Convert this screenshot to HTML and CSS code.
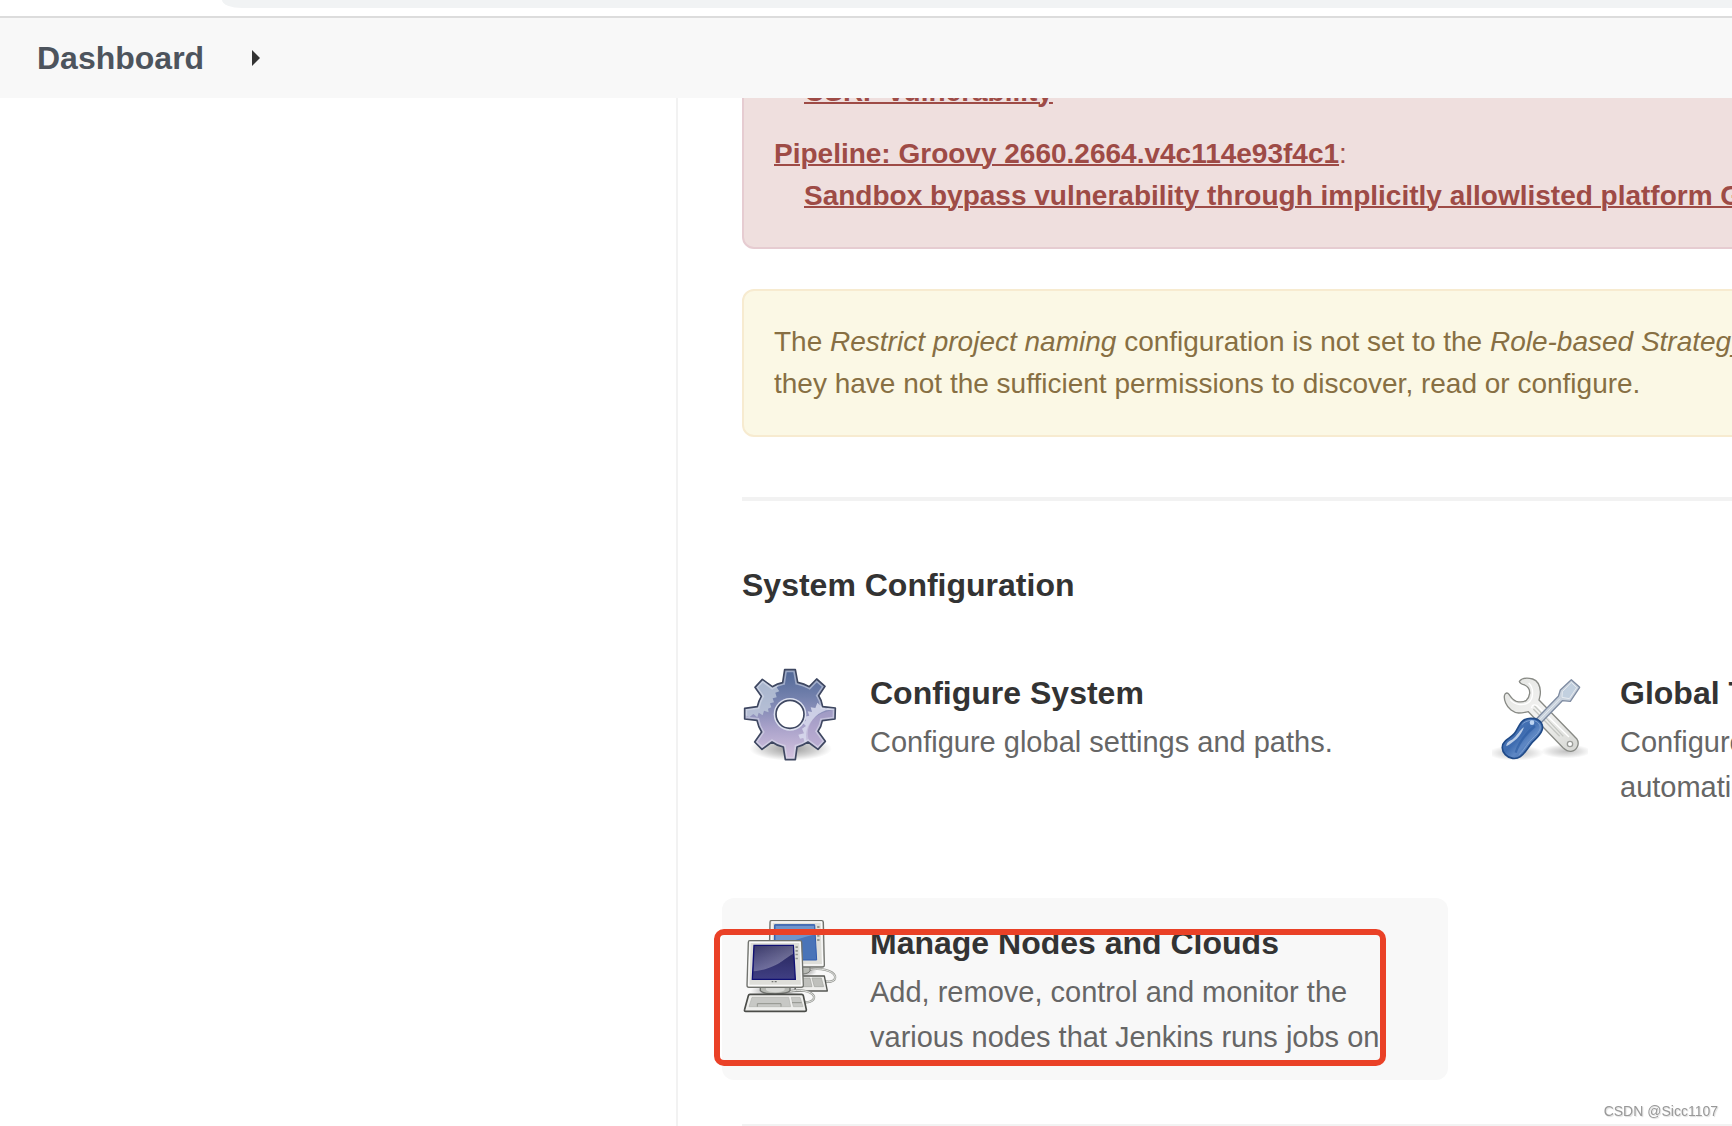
FILE: index.html
```html
<!DOCTYPE html>
<html lang="en">
<head>
    <meta charset="UTF-8">
    <meta name="viewport" content="width=device-width, initial-scale=1.0">
    <title>Manage Jenkins</title>
    <link rel="stylesheet" href="styles.css">
</head>
<body>
    <div class="browser-bar">
        <div class="address"></div>
    </div>

    <nav class="breadcrumbs">
        <a href="#" class="crumb">Dashboard</a>
        <button class="crumb-arrow" aria-label="Open breadcrumb menu">
            <svg width="8" height="16" viewBox="0 0 8 16"><path d="M0 0L8 8L0 16Z" fill="#333"/></svg>
        </button>
    </nav>

    <div class="page">
        <aside class="side-panel"></aside>
        <main class="main-panel">
            <div class="alert alert-danger">
                <dl>
                    <dd><a href="#">CSRF vulnerability</a></dd>
                    <dt><a href="#">Pipeline: Groovy 2660.2664.v4c114e93f4c1</a>:</dt>
                    <dd><a href="#">Sandbox bypass vulnerability through implicitly allowlisted platform Groovy</a></dd>
                </dl>
            </div>

            <div class="alert alert-warning">
                The <i>Restrict project naming</i> configuration is not set to the <i>Role-based Strategy</i>.<br>
                they have not the sufficient permissions to discover, read or configure.
            </div>

            <hr class="divider">

            <h2 class="section-title">System Configuration</h2>
            <div class="cards">
                <a href="#" class="card">
                    <svg class="card-icon" viewBox="66 54 288 288" aria-hidden="true">
                        <defs>
                            <linearGradient id="gearFill" x1="0" y1="0" x2="0" y2="1">
                                <stop offset="0" stop-color="#4f6796"/>
                                <stop offset="0.3" stop-color="#7280ac"/>
                                <stop offset="0.65" stop-color="#a9a2ca"/>
                                <stop offset="1" stop-color="#d6c4e0"/>
                            </linearGradient>
                            <radialGradient id="shade">
                                <stop offset="0" stop-color="#000" stop-opacity="0.4"/>
                                <stop offset="0.6" stop-color="#000" stop-opacity="0.18"/>
                                <stop offset="1" stop-color="#000" stop-opacity="0"/>
                            </radialGradient>
                            <path id="gear" d="M194 59L226 59L233 97Q252 101 268 110L290 87L315 109L296 137Q305 150 308 170L346 174L345 207L307 212Q304 230 294 244L316 274L294 298L264 276Q249 286 231 291L226 329L196 329L190 291Q171 287 156 276L126 298L104 276L125 246Q115 231 111 211L74 207L74 175L112 170Q116 152 124 139L105 112L127 88L157 110Q172 101 188 98Z"/>
                            <clipPath id="gearClip"><use href="#gear"/></clipPath>
                        </defs>
                        <ellipse cx="212" cy="296" rx="124" ry="36" fill="url(#shade)"/>
                        <use href="#gear" fill="url(#gearFill)"/>
                        <g clip-path="url(#gearClip)">
                            <path d="M66 54H180V100L170 112L178 124L166 128L170 142L158 145L162 157L150 160L154 172L144 176L146 187L132 182L128 196L116 188L112 202L100 192L88 202L66 190Z" fill="#c3cedd" opacity="0.75"/>
                            <path d="M350 165L318 176L300 166L292 158L286 174L272 172L276 186L263 184L268 197L254 200L258 212L248 218L258 228L246 236L252 250L235 254L240 266L250 264L258 290L268 272C253 240 275 195 318 181L350 178Z" fill="#dcdff0" opacity="0.8"/>
                            <path d="M262 280C248 238 272 187 350 178V310Z" fill="#b4a5ce" opacity="0.5"/>
                            <use href="#gear" fill="none" stroke="#dfe3f0" stroke-width="15" opacity="0.5"/>
                        </g>
                        <use href="#gear" fill="none" stroke="#3e4761" stroke-width="5" stroke-linejoin="round"/>
                        <circle cx="210" cy="193" r="49" fill="#dce0ef"/>
                        <circle cx="210" cy="193" r="42" fill="#fff" stroke="#3e4761" stroke-width="5"/>
                    </svg>
                    <div class="card-text">
                        <h3>Configure System</h3>
                        <p>Configure global settings and paths.</p>
                    </div>
                </a>

                <a href="#" class="card">
                    <svg class="card-icon" viewBox="36 24 288 288" aria-hidden="true">
                        <defs>
                            <linearGradient id="steel" x1="0" y1="0" x2="1" y2="1">
                                <stop offset="0" stop-color="#e2e3e0"/>
                                <stop offset="0.5" stop-color="#f3f3f2"/>
                                <stop offset="1" stop-color="#d5d6d2"/>
                            </linearGradient>
                            <linearGradient id="handle" x1="0" y1="0" x2="1" y2="1">
                                <stop offset="0" stop-color="#5880bd"/>
                                <stop offset="0.45" stop-color="#3e6cb0"/>
                                <stop offset="0.6" stop-color="#5f88c4"/>
                                <stop offset="1" stop-color="#20509a"/>
                            </linearGradient>
                        </defs>
                        <ellipse cx="108" cy="279" rx="84" ry="23" fill="url(#shade)" opacity="0.6"/>
                        <ellipse cx="258" cy="274" rx="76" ry="21" fill="url(#shade)" opacity="0.6"/>
                        <path d="M118 64C126 54 143 53 158 57C172 62 180 78 181 94C182 105 179 112 177 120L290 236C301 252 290 272 273 274C263 275 256 269 249 263L145 155C136 157 127 159 116 159C100 158 84 146 77 129C73 119 71 107 76 101C80 98 84 99 87 103C94 114 101 121 109 124C120 127 131 126 139 121C145 115 148 108 149 100C150 88 142 79 134 75C127 73 119 71 118 64Z" fill="url(#steel)" stroke="#888a85" stroke-width="4"/>
                        <path d="M163 137L250 229M160 147L239 229" stroke="#c5c7c3" stroke-width="4" fill="none"/>
                        <path d="M155 144Q156 131 170 136L267 231M91 119C103 134 127 139 145 128C161 117 163 85 146 69" stroke="#fff" stroke-width="4" fill="none"/>
                        <circle cx="270" cy="252" r="8" fill="#fff" stroke="#999b97" stroke-width="4"/>
                        <path d="M169 177L235 109L241 90L274 59L299 82L271 124L247 122L182 190Z" fill="#c9d2dd" stroke="#7e8ba1" stroke-width="4" stroke-linejoin="round"/>
                        <path d="M177 181L240 116M247 95L274 67L290 83L268 116L246 112Z" fill="#c2d0df" stroke="#e6ebf0" stroke-width="3"/>
                        <path d="M124 187C134 175 150 173 165 176C183 181 191 195 186 211C181 226 168 236 156 248C144 262 135 280 121 290C108 299 88 297 76 284C64 272 64 254 75 244C83 236 94 231 103 221C111 212 115 198 124 187Z" fill="url(#handle)" stroke="#204a87" stroke-width="5"/>
                        <path d="M127 193C137 181 156 179 168 184C179 190 183 200 179 210C172 225 157 234 148 245C136 260 128 276 116 285" fill="none" stroke="#7c9fd0" stroke-width="3"/>
                        <path d="M79 259C102 247 122 229 132 202C119 209 112 228 98 238C88 243 79 248 79 259Z" fill="#dbe6f5" opacity="0.8"/>
                        <path d="M165 198C143 216 119 240 107 278" fill="none" stroke="#2a5aa2" stroke-width="7" opacity="0.6"/>
                        <circle cx="156" cy="188" r="7" fill="#bdd4f2"/>
                    </svg>
                    <div class="card-text">
                        <h3>Global Tool Configuration</h3>
                        <p>Configure tools, their locations and automatic installers.</p>
                    </div>
                </a>

                <a href="#" class="card card-hover">
                    <svg class="card-icon" viewBox="96 84 288 288" aria-hidden="true">
                        <defs>
                            <linearGradient id="screen" x1="0" y1="0" x2="0" y2="1">
                                <stop offset="0" stop-color="#25245a"/>
                                <stop offset="1" stop-color="#403f83"/>
                            </linearGradient>
                            <linearGradient id="glare" x1="0" y1="0" x2="1" y2="1">
                                <stop offset="0" stop-color="#fff" stop-opacity="0.1"/>
                                <stop offset="1" stop-color="#fff" stop-opacity="0.4"/>
                            </linearGradient>
                        </defs>
                        <!-- back computer -->
                        <path d="M292 241C330 230 370 243 375 258C380 277 350 279 337 270" fill="none" stroke="#999b97" stroke-width="7"/>
                        <path d="M292 241C330 230 370 243 375 258C380 277 350 279 337 270" fill="none" stroke="#e2e3e0" stroke-width="3"/>
                        <ellipse cx="278" cy="245" rx="43" ry="15" fill="url(#shade)"/>
                        <path d="M240 228H300V242C297 253 270 255 240 250Z" fill="#b6b8b3" stroke="#777974" stroke-width="3"/>
                        <path d="M183 92H335Q340 92 340 97L343 225Q343 231 337 231H182Q177 230 177 224L180 97Q180 92 183 92Z" fill="#deded9" stroke="#70726e" stroke-width="4"/>
                        <path d="M186 96H334L338 225H184Z" fill="none" stroke="#fafafa" stroke-width="4"/>
                        <path d="M194 104H314L320 210H192Z" fill="#4a74b8" stroke="#315caf" stroke-width="3"/>
                        <path d="M197 108H312V134C278 140 253 155 197 163Z" fill="#8daedb" opacity="0.55"/>
                        <path d="M325 108V114M325 121V127M325 134V140M325 147V153" stroke="#92948e" stroke-width="7"/>
                        <path d="M258 258H343L352 303H255Z" fill="#eeeeec" stroke="#555753" stroke-width="4" stroke-linejoin="round"/>
                        <path d="M268 264H300L306 290H268ZM306 264H334L341 290H313Z" fill="#bfc0bc" stroke="#a1a39e" stroke-width="2"/>
                        <!-- front computer -->
                        <ellipse cx="197" cy="303" rx="76" ry="20" fill="url(#shade)"/>
                        <path d="M234 306C268 294 307 305 312 319C315 335 290 340 276 334" fill="none" stroke="#999b97" stroke-width="7"/>
                        <path d="M234 306C268 294 307 305 312 319C315 335 290 340 276 334" fill="none" stroke="#e2e3e0" stroke-width="3"/>
                        <path d="M151 291H240V302C233 314 160 315 151 302Z" fill="#b7b9b4" stroke="#70726e" stroke-width="4"/>
                        <path d="M168 291H224V300C216 309 176 309 168 300Z" fill="#d7d8d5"/>
                        <path d="M119 152H270Q275 152 275 157L280 286Q280 292 274 292H116Q111 292 111 286L115 157Q115 152 119 152Z" fill="#deded9" stroke="#70726e" stroke-width="4"/>
                        <path d="M120 157H270L275 286H116Z" fill="none" stroke="#fafafa" stroke-width="4"/>
                        <path d="M132 166H250L256 268H127Z" fill="url(#screen)" stroke="#101074" stroke-width="4"/>
                        <path d="M134 168H249V192C220 206 205 235 131 244Z" fill="url(#glare)"/>
                        <path d="M260 169V174M260 180V185M260 191V196M260 203V208" stroke="#92948e" stroke-width="7"/>
                        <path d="M185 275H190M194 275H200" stroke="#777974" stroke-width="4"/>
                        <path d="M120 313H275Q279 313 280 317L289 359Q289 364 284 364H107Q102 364 104 358L115 317Q116 313 120 313Z" fill="#eeeeec" stroke="#4b4d49" stroke-width="5"/>
                        <path d="M126 322H236L242 350H117ZM244 322H270L279 350H250Z" fill="#c7c8c5" stroke="#b2b3af" stroke-width="2"/>
                        <path d="M142 350V341H213V350M246 338H275" fill="none" stroke="#92948e" stroke-width="3"/>
                    </svg>
                    <div class="card-text">
                        <h3>Manage Nodes and Clouds</h3>
                        <p>Add, remove, control and monitor the various nodes that Jenkins runs jobs on.</p>
                    </div>
                    <span class="highlight"></span>
                </a>
            </div>

            <hr class="divider">
        </main>
    </div>

    <div class="watermark">CSDN @Sicc1107</div>
</body>
</html>
```
FILE: styles.css
```css
* {
    box-sizing: border-box;
}

html, body {
    height: 100%;
    margin: 0;
}

body {
    display: flex;
    flex-direction: column;
    overflow: hidden;
    background-color: #fff;
    color: #333;
    font-family: "Liberation Sans", Arial, sans-serif;
    font-size: 28px;
    line-height: 42px;
}

a {
    color: inherit;
}

.browser-bar {
    flex: none;
    height: 18px;
    padding-left: 222px;
    border-bottom: 2px solid #dcdcdc;
}

.address {
    height: 8px;
    background-color: #f1f3f4;
    border-bottom-left-radius: 20px 8px;
}

.breadcrumbs {
    flex: none;
    display: flex;
    align-items: center;
    gap: 48px;
    height: 80px;
    padding: 0 37px;
    background-color: #f8f8f8;
}

.crumb {
    color: #4d545d;
    font-size: 32px;
    font-weight: bold;
    text-decoration: none;
}

.crumb-arrow {
    display: flex;
    padding: 0;
    border: none;
    background: none;
    cursor: pointer;
}

.page {
    flex: 1;
    min-height: 0;
    display: flex;
    overflow: hidden;
}

.side-panel {
    flex: none;
    width: 678px;
    border-right: 2px solid #f2f2f2;
}

/* wider than the window, scrolled down a little */
.main-panel {
    flex: none;
    width: 100%;
    margin-top: -59px;
    padding: 0 64px;
}

.alert {
    margin-bottom: 40px;
    padding: 30px;
    border: 2px solid;
    border-radius: 12px;
    white-space: nowrap;
}

.alert dl {
    margin: 0;
}

.alert dt {
    margin-top: 20px;
}

.alert dd {
    margin-left: 30px;
}

.alert a {
    font-weight: bold;
    text-decoration-thickness: 2px;
}

.alert-danger {
    background-color: #efdfde;
    border-color: #e6ccd1;
    color: #9e4b46;
}

.alert-warning {
    background-color: #fbf8e5;
    border-color: #f7ebd0;
    color: #876f43;
}

.divider {
    height: 4px;
    margin: 60px 0;
    border: none;
    background-color: #f2f2f2;
}

.section-title {
    margin: 64px 0 43px;
    font-size: 32px;
    line-height: 40px;
}

.cards {
    display: grid;
    grid-template-columns: repeat(2, 726px);
    gap: 68px 24px;
    margin: 0 -20px 44px;
}

.cards + .divider {
    margin: 0;
}

.card {
    position: relative;
    display: flex;
    align-items: flex-start;
    gap: 32px;
    padding: 20px;
    border-radius: 12px;
    text-decoration: none;
}

.card-hover {
    background-color: #f8f8f8;
}

.card-icon {
    flex: none;
    width: 96px;
    height: 96px;
}

.card-text h3 {
    margin: 0 0 2px;
    font-size: 32px;
    line-height: 50px;
}

.card-text p {
    margin: 0;
    color: #666;
    font-size: 29px;
    line-height: 45px;
}

.highlight {
    position: absolute;
    top: 31px;
    left: -8px;
    width: 672px;
    height: 137px;
    border: 6px solid #ea4127;
    border-radius: 10px;
}

.watermark {
    position: fixed;
    right: 14px;
    bottom: 6px;
    color: #999;
    font-size: 14px;
    line-height: 18px;
    text-shadow: 1px 1px 1px #ddd;
}
```
